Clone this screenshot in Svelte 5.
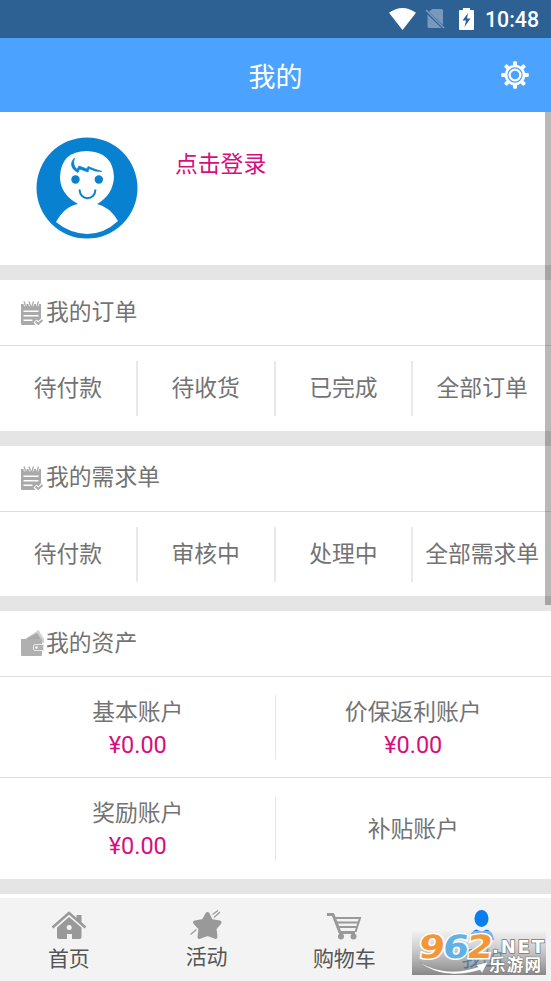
<script lang="ts">
  const orderGroups = [
    { title: '我的订单', items: ['待付款', '待收货', '已完成', '全部订单'] },
    { title: '我的需求单', items: ['待付款', '审核中', '处理中', '全部需求单'] },
  ];

  const accounts = [
    { name: '基本账户', amount: '¥0.00' },
    { name: '价保返利账户', amount: '¥0.00' },
    { name: '奖励账户', amount: '¥0.00' },
    { name: '补贴账户', amount: '' },
  ];
</script>

<div class="screen">
  <div class="status">
    <svg width="27" height="22" viewBox="0 0 27 22">
      <path d="M0 4.8Q13.5-4.8 27 4.8L13.5 22Z" fill="#fff" />
    </svg>
    <svg class="sim" width="20" height="22" viewBox="0 0 20 22">
      <path d="M7 1h9.500q1.500 0 1.500 1.500V17L4 3.800ZM2.500 6.500L16.500 20H4q-1.500 0-1.500-1.500Z" fill="#7898bd" />
      <path d="M1 2l18 18" stroke="#7898bd" stroke-width="1.700" />
    </svg>
    <svg class="battery" width="15" height="22" viewBox="0 0 15 22">
      <path d="M1 2h3V0h7v2h3q1 0 1 1v18q0 1-1 1H1q-1 0-1-1V3q0-1 1-1Z" fill="#fff" />
      <path d="M9 5L3.500 12.500H7L5.500 19L11.500 10.500H8Z" fill="#2d6093" />
    </svg>
    <span class="clock">10:48</span>
  </div>

  <header>
    <h1>我的</h1>
    <svg class="gear" width="28" height="28" viewBox="-14 -14 28 28">
      {#each [0, 45, 90, 135, 180, 225, 270, 315] as angle}
        <rect x="-2" y="-13.800" width="4" height="5" rx="1.300" fill="#fff" transform="rotate({angle})" />
      {/each}
      <circle r="9" fill="none" stroke="#fff" stroke-width="2.700" />
      <circle r="5.400" fill="none" stroke="#fff" stroke-width="2.200" />
    </svg>
  </header>

  <main>
    <section class="profile">
      <svg width="102" height="102" viewBox="0 0 102 102">
        <circle cx="51" cy="51" r="50.500" fill="#0882d0" />
        <path d="M20 85Q29 69 42 67Q24 57 24 40Q25 14 51 14Q77 15 78 40Q77 58 61 67Q74 70 82 84Q68 97 51 97Q33 96 20 85Z" fill="#fff" />
        <circle cx="39.500" cy="42.500" r="4.200" fill="#0882d0" />
        <circle cx="62.800" cy="42.500" r="4.200" fill="#0882d0" />
        <path d="M43.500 52.500C44 64 59 64 59.500 52.500" fill="none" stroke="#0882d0" stroke-width="2" />
        <path d="M38.500 21C33.500 26 35 32 42 35.500L43.500 32L52 35L53 31.500Q59 35 66 34.500Q59 32.500 52 29.500L51 32L43 29L41 32.500Q36 28 38.500 21Z" fill="#0882d0" stroke="#0882d0" stroke-width=".7" />
      </svg>
      <span class="login">点击登录</span>
    </section>

    {#each orderGroups as group}
      <section class="card">
        <h2>
          <svg width="25" height="26" viewBox="0 0 25 26">
            <path d="M1 4h20v17l-6 4H2q-1 0-1-1Z" fill="#a9a9a9" />
            <path d="M4 1l1.500 5M9 1l1.500 5M13.500 1L12 6M18.500 1L17 6" stroke="#fff" stroke-width="2.800" />
            <path d="M4 1.500l1.500 4.500M9 1.500l1.500 4.500M13.500 1.500L12 6M18.500 1.500L17 6" stroke="#a9a9a9" stroke-width="1.300" />
            <path d="M3.500 11.200h15M3.500 15.700h15M3.500 20.200h9" stroke="#fff" stroke-width="1.500" />
            <path d="M15 21l3.300 3.300L23 19.500" fill="none" stroke="#fff" stroke-width="4.500" />
            <path d="M15.500 21.500l2.800 2.500L22.500 20" fill="none" stroke="#a9a9a9" stroke-width="2" />
          </svg>
          {group.title}
        </h2>
        <div class="links">
          {#each group.items as item}
            <span>{item}</span>
          {/each}
        </div>
      </section>
    {/each}

    <section class="card">
      <h2>
        <svg class="wallet" width="25" height="27" viewBox="0 0 25 27">
          <path d="M5 9L18.500 0L24 9V13H5Z" fill="#d0d0d0" />
          <path d="M6 9L17 3L21 9Z" fill="#a9a9a9" />
          <path d="M1 9h20q1 0 1 1v15q0 1-1 1H2q-1 0-1-1Z" fill="#b0b0b0" />
          <path d="M23.500 14.500H15q-1.500 0-1.500 1.500v3q0 1.500 1.500 1.500h8.500Z" fill="#b0b0b0" stroke="#e8e8e8" />
          <circle cx="16.500" cy="17.500" r="1.200" fill="#fff" />
        </svg>
        我的资产
      </h2>
      <div class="accounts">
        {#each accounts as account}
          <div class="account">
            <span>{account.name}</span>
            {#if account.amount}<b>{account.amount}</b>{/if}
          </div>
        {/each}
      </div>
    </section>
    <div class="scrollbar"></div>
  </main>

  <nav>
    <div class="tab">
      <svg width="36" height="32" viewBox="0 0 36 32">
        <path d="M1.500 19.500L18 5L34.500 19.500" fill="none" stroke="#999" stroke-width="2.500" />
        <path d="M25.500 7h5v9l-5-4.500Z" fill="#999" />
        <path d="M6 19.500L18 9L30.500 19.500V29q0 2-2 2H21v-5h-5v5H8q-2 0-2-2Z" fill="#999" />
        <circle cx="18.200" cy="19.500" r="2.500" fill="#f3f3f3" />
      </svg>
      <span>首页</span>
    </div>
    <div class="tab event">
      <svg width="36" height="32" viewBox="0 0 36 32">
        <path d="M18.500 6L22 13L30.500 14.500L25.500 20.500L26.500 29L18.500 26L10.500 29L11.500 20.500L6 14.500L14.500 13Z" fill="#999" stroke="#999" stroke-width="4" stroke-linejoin="round" />
        <path d="M23.500 6.500l5.500-4M25 9.500l6-5.500M1.500 26.500l6-5" stroke="#999" stroke-width="1.200" />
      </svg>
      <span>活动</span>
    </div>
    <div class="tab">
      <svg width="36" height="32" viewBox="0 0 36 32">
        <path d="M1 6.500h6l7 18h15" fill="none" stroke="#999" stroke-width="3" stroke-linejoin="round" />
        <path d="M9 10h25L29.500 24M10 14.500h22M12 19h19" fill="none" stroke="#999" stroke-width="2" />
        <circle cx="15" cy="28.500" r="3" fill="#999" />
        <circle cx="27.500" cy="28.500" r="3" fill="#999" />
      </svg>
      <span>购物车</span>
    </div>
    <div class="tab active">
      <svg width="36" height="32" viewBox="0 0 36 32">
        <ellipse cx="17.500" cy="10.500" rx="7" ry="8.500" fill="#087ff0" />
        <path d="M5 32Q6 23 12.500 21.500Q17.500 25 22.500 21.500Q29 23 30 32Z" fill="#087ff0" />
      </svg>
      <span>我的</span>
    </div>
    <svg class="mark" width="134" height="44" viewBox="0 0 134 44">
      <defs>
        <linearGradient id="plate" x2="0" y2="1">
          <stop stop-color="#eee" stop-opacity=".5" />
          <stop offset="1" stop-color="#555" stop-opacity=".68" />
        </linearGradient>
      </defs>
      <rect width="134" height="44" fill="url(#plate)" />
      <path d="M7 31Q34 47 66 36L64 34L76 31L70 42L68 39Q31 50 7 31Z" fill="#fff" stroke="#888" stroke-width=".4" />
      <g class="digits" transform="translate(5 0) skewX(-7)">
        <text x="4" y="27" textLength="26" lengthAdjust="spacingAndGlyphs" fill="#f39636">9</text>
        <text x="28" y="27" textLength="26" lengthAdjust="spacingAndGlyphs" fill="#61b1e4">6</text>
        <text x="52" y="27" textLength="26" lengthAdjust="spacingAndGlyphs" fill="#f39636">2</text>
      </g>
      <text class="net" x="80" y="21.500" textLength="52" lengthAdjust="spacing">.NET</text>
      <text class="site" x="77" y="39.500" textLength="52">乐游网</text>
    </svg>
  </nav>
</div>

<style>
  :global(body) {
    background: #fff;
    overflow: hidden;
  }
  .screen {
    display: flex;
    flex-direction: column;
    height: 981px;
    font-family: Roboto, 'Noto Sans CJK SC', sans-serif;
    font-size: 22.8px;
    color: #737373;
  }
  svg {
    display: block;
    flex: none;
  }
  .status {
    box-sizing: border-box;
    display: flex;
    align-items: center;
    justify-content: flex-end;
    height: 38px;
    padding-right: 13px;
    background: #2d6093;
  }
  .sim { margin-left: 9px; }
  .battery { margin: -1px 11px 0 14px; }
  .clock {
    width: 53px;
    padding-top: 2px;
    color: #fff;
    font-size: 21.3px;
    font-weight: 500;
    line-height: 30px;
    white-space: nowrap;
  }
  header {
    display: grid;
    grid-template-columns: 1fr auto 1fr;
    align-items: center;
    height: 74px;
    background: #4ba3ff;
    color: #fff;
  }
  h1 {
    grid-column: 2;
    margin: 0;
    padding-top: 6px;
    font-size: 27px;
    font-weight: 400;
    line-height: 40px;
  }
  .gear {
    justify-self: end;
    margin-right: 22px;
  }
  main {
    position: relative;
    height: 786px;
    flex: none;
    background: #fff;
  }
  .profile {
    box-sizing: border-box;
    display: flex;
    gap: 37px;
    height: 168px;
    padding: 25px 0 0 36px;
    border-bottom: 15px solid #e5e5e5;
  }
  .login {
    padding-top: 11px;
    color: #d5107e;
    line-height: 34px;
  }
  .card { border-bottom: 15px solid #e5e5e5; }
  h2 {
    display: flex;
    align-items: center;
    height: 65px;
    margin: 0;
    padding-left: 20px;
    gap: 1px;
    border-bottom: 1px solid #dedede;
    font-size: inherit;
    font-weight: 400;
    line-height: 34px;
  }
  .links {
    display: grid;
    grid-template-columns: repeat(4, 1fr);
    padding: 15px 0 14.500px;
  }
  .links span {
    height: 55px;
    border-right: 2px solid #e9e9e9;
    line-height: 55px;
    text-align: center;
    white-space: nowrap;
  }
  .links span:last-child { border: 0; }
  .accounts {
    display: grid;
    grid-template-columns: 1fr 1fr;
  }
  .account {
    box-sizing: border-box;
    display: flex;
    flex-direction: column;
    align-items: center;
    justify-content: center;
    height: 101px;
    padding-top: 3px;
    line-height: 34px;
    /* short vertical rule between the two columns */
    background: linear-gradient(#e5e5e5, #e5e5e5) right center / 1px 64px no-repeat;
  }
  .account:nth-child(even) { background: none; }
  .account:nth-child(-n + 2) { border-bottom: 1px solid #dedede; }
  .account b {
    height: 32px;
    color: #d5107e;
    font-size: 23.5px;
    font-weight: 400;
    line-height: 31px;
  }
  .scrollbar {
    position: absolute;
    top: 0;
    right: 0;
    width: 6px;
    height: 493px;
    background: rgb(0 0 0 / 28%);
  }
  nav {
    position: relative;
    display: grid;
    grid-template-columns: repeat(4, 1fr);
    height: 83px;
    background: #f3f3f3;
    color: #555;
    font-size: 21px;
  }
  .tab {
    display: flex;
    flex-direction: column;
    align-items: center;
    padding-top: 10px;
  }
  .tab span { line-height: 38px; }
  .event span { margin-top: -2px; }
  .active { color: #087ff0; }
  .mark {
    position: absolute;
    top: 33px;
    right: 5px;
    overflow: visible;
  }
  .digits {
    font: bold 32px 'DejaVu Sans', sans-serif;
    paint-order: stroke;
    stroke: #fff;
    stroke-width: 3px;
  }
  .net {
    font: bold 18px 'DejaVu Sans', sans-serif;
    fill: #fff;
    stroke: #777;
    stroke-width: 1.500px;
    paint-order: stroke;
  }
  .site {
    font: bold 16.5px 'Noto Sans CJK SC', sans-serif;
    fill: #fff;
    stroke: #777;
    stroke-width: 1px;
    paint-order: stroke;
  }
</style>
